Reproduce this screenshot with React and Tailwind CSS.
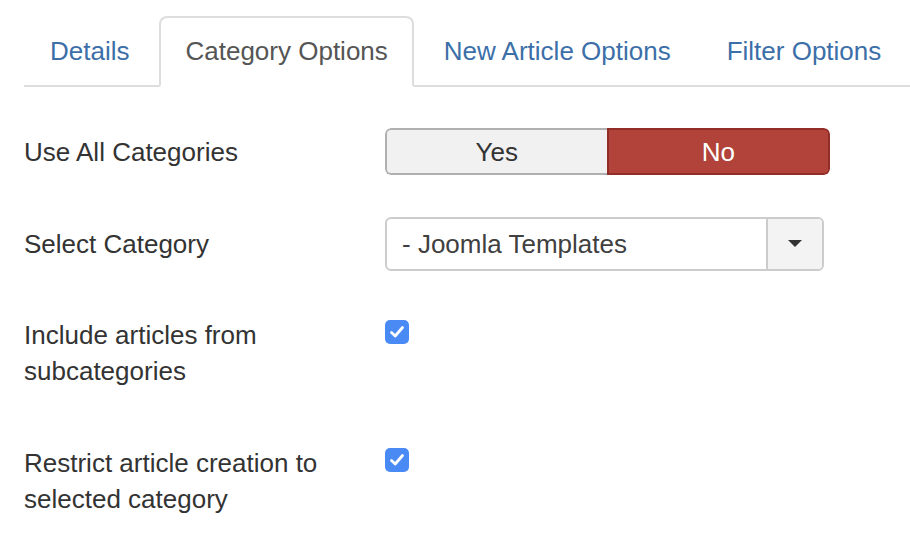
import React from "react";

function Check() {
  return (
    <div className="w-[24px] h-[24px] rounded-[5px] bg-[#4a8af4] flex items-center justify-center">
      <svg width="18" height="18" viewBox="0 0 18 18" fill="none">
        <path d="M3.5 9.5 L7.2 13 L14.5 4.5" stroke="white" strokeWidth="2.8" strokeLinecap="round" strokeLinejoin="round" />
      </svg>
    </div>
  );
}

export default function App() {
  const tabs = ["Details", "Category Options", "New Article Options", "Filter Options"];
  return (
    <div className="w-[910px] h-[544px] bg-white overflow-hidden pl-6 pt-4 text-[26px] leading-[36px] text-[#333]" style={{ fontFamily: '"Liberation Sans", Arial, sans-serif' }}>
      <div className="flex border-b-2 border-[#dddddd] h-[71px]">
        {tabs.map((t, i) => {
          const active = i === 1;
          return (
            <div
              key={t}
              className={
                active
                  ? "shrink-0 whitespace-nowrap mr-1 h-[71px] px-[24px] pb-[2px] flex items-center border-2 border-[#dddddd] border-b-white rounded-t-[8px] text-[#555555] bg-white"
                  : "shrink-0 whitespace-nowrap mr-1 h-[71px] px-[24px] pb-[2px] flex items-center border-2 border-transparent text-[#3c6fa8]"
              }
            >
              {t}
            </div>
          );
        })}
      </div>

      <div className="flex items-center mt-[41px]">
        <div className="w-[361px]">Use All Categories</div>
        <div className="flex w-[445px] h-[47px] rounded-[6px] overflow-hidden">
          <div className="flex-1 flex items-center justify-center bg-[#f1f1f1] border-2 border-r-0 border-[#b0b0b0] rounded-l-[6px] text-[#333]">Yes</div>
          <div className="flex-1 flex items-center justify-center bg-[#b1433a] border-2 border-[#922e27] rounded-r-[6px] text-white">No</div>
        </div>
      </div>

      <div className="flex items-center mt-[42px]">
        <div className="w-[361px]">Select Category</div>
        <div className="flex w-[439px] h-[54px] border-2 border-[#cccccc] rounded-[6px] overflow-hidden bg-white">
          <div className="flex-1 flex items-center pl-[15px] text-[#404040]">- Joomla Templates</div>
          <div className="w-[56px] border-l-2 border-[#cccccc] bg-[#f3f3f3] flex items-center justify-center">
            <svg width="16" height="8" viewBox="0 0 16 8">
              <path d="M1 0 L15 0 L8 7 Z" fill="#333" />
            </svg>
          </div>
        </div>
      </div>

      <div className="flex items-start mt-[46px]">
        <div className="w-[361px]">
          <div className="w-[340px]">Include articles from subcategories</div>
        </div>
        <div className="pt-[3px]">
          <Check />
        </div>
      </div>

      <div className="flex items-start mt-[56px]">
        <div className="w-[361px]">
          <div className="w-[340px]">Restrict article creation to selected category</div>
        </div>
        <div className="pt-[3px]">
          <Check />
        </div>
      </div>
    </div>
  );
}
